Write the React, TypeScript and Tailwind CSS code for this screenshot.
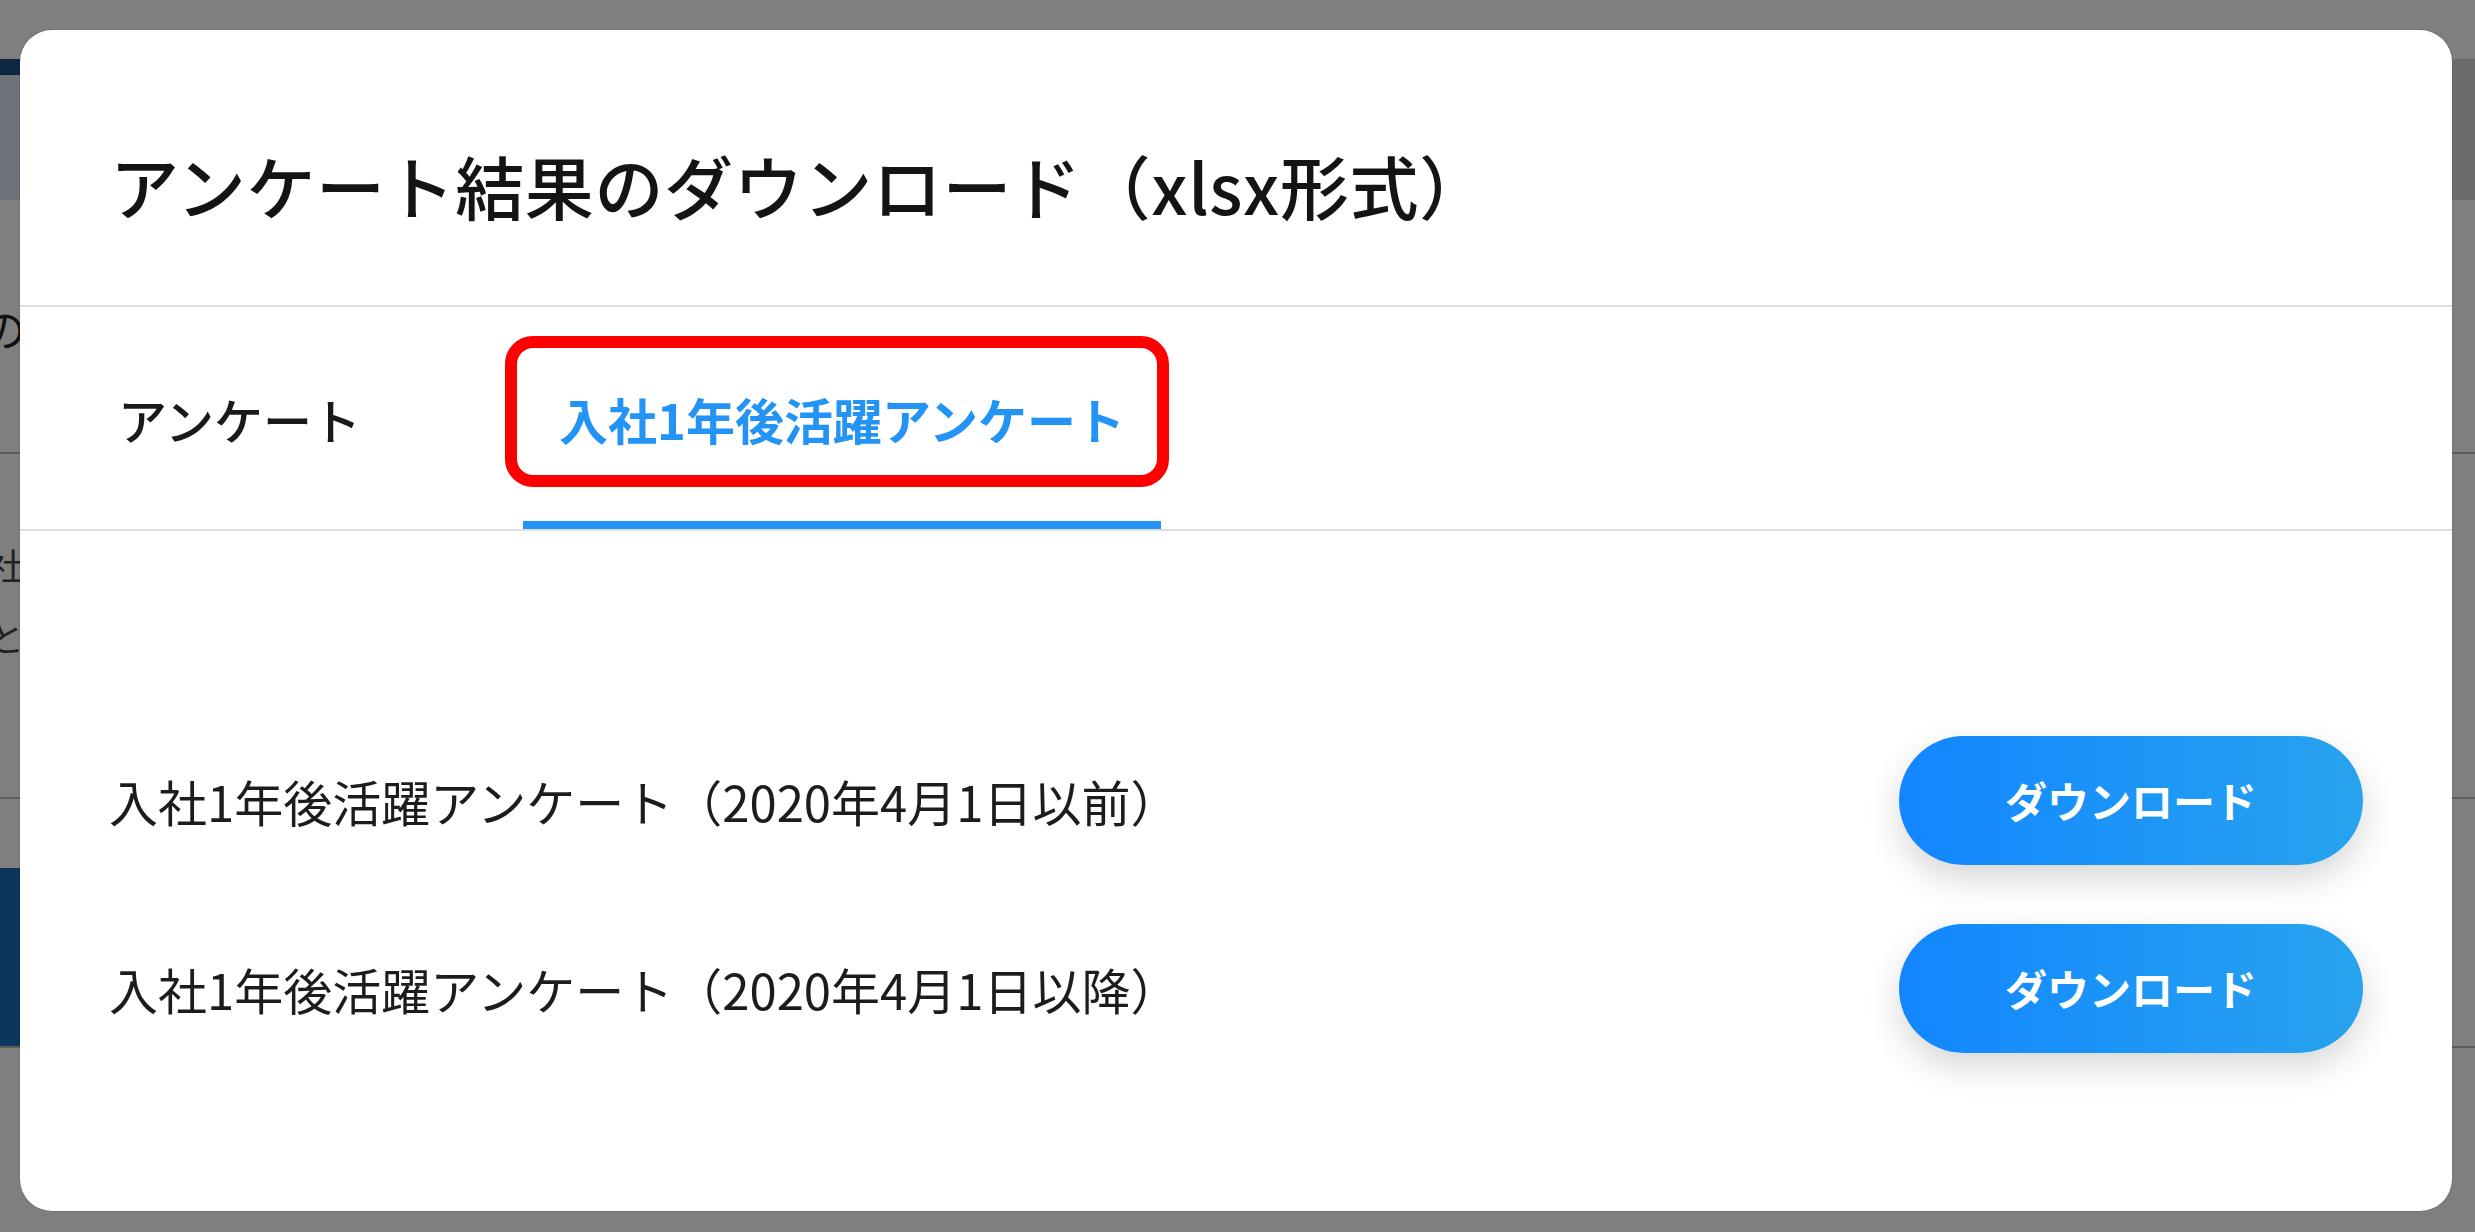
import { useState } from "react";

const FONT = { fontFamily: '"Noto Sans CJK JP", "Noto Sans", sans-serif' };

const tabs = ["アンケート", "入社1年後活躍アンケート"];

const rows = [
  "入社1年後活躍アンケート（2020年4月1日以前）",
  "入社1年後活躍アンケート（2020年4月1日以降）",
];

function PageBehind() {
  return (
    <div className="flex h-full w-full flex-col bg-white text-[#222]">
      <div className="h-[59px]" />
      <div className="flex h-[141px]">
        <div className="flex w-[40px] flex-col">
          <div className="h-[16px] bg-[#1c4f86]" />
          <div className="flex-1 bg-[#dbe6f0]" />
        </div>
        <div className="flex-1" />
        <div className="w-[40px] bg-[#d2d6d9]" />
      </div>
      <div className="flex h-[252px] items-start pt-[106px] text-[44px] leading-none">
        <span className="-ml-[18px]">の</span>
      </div>
      <div className="flex h-[345px] border-t-2 border-[#bbb]">
        <div className="flex w-[60px] flex-col gap-[36px] pt-[92px] text-[36px] leading-none text-[#444]">
          <span className="-ml-[12px]">社</span>
          <span className="-ml-[12px]">と</span>
        </div>
      </div>
      <div className="flex h-[249px] border-t-2 border-[#bbb]">
        <div className="mt-[69px] h-[178px] w-[40px] bg-[#1a6cb8]" />
        <div className="flex-1" />
      </div>
      <div className="flex h-[133px] border-t-2 border-[#bbb]">
        <div className="ml-[1088px] mt-[113px] h-[20px] w-[99px] bg-[#cad4da]" />
      </div>
    </div>
  );
}

export default function App() {
  const [active, setActive] = useState(1);

  return (
    <div className="relative h-[1232px] w-[2475px] overflow-hidden" style={FONT}>
      <PageBehind />

      {/* overlay + modal */}
      <div className="absolute inset-0 flex items-start bg-black/50 pl-[20px] pt-[30px]">
        <div className="flex h-[1181px] w-[2432px] flex-col overflow-hidden rounded-[32px] bg-white shadow-[0_0_2px_rgba(0,0,0,0.25)]">
          <div className="flex h-[277px] shrink-0 items-center border-b-2 border-[#dedede] px-[90px] pt-[36px]">
            <h1 className="text-[69px] font-medium leading-none tracking-[0.6px] text-[#141414]">
              アンケート結果のダウンロード（xlsx形式）
            </h1>
          </div>

          <div className="flex h-[224px] shrink-0 gap-[126px] border-b-2 border-[#dedede] pl-[62px]">
            {tabs.map((t, idx) => (
              <button
                key={t}
                onClick={() => setActive(idx)}
                className={
                  idx === active
                    ? "relative flex h-full items-center px-[36px] text-[49px] font-bold leading-none text-[#2393f5]"
                    : "relative flex h-full items-center px-[36px] text-[49px] font-medium leading-none text-[#1a1a1a]"
                }
              >
                {t}
                {idx === active && (
                  <>
                    <span className="absolute bottom-0 left-0 right-0 h-[8px] bg-[#2393f5]" />
                    <span className="absolute left-[-18px] top-[29px] h-[151px] w-[664px] rounded-[28px] border-[12px] border-[#ff0000]" />
                  </>
                )}
              </button>
            ))}
          </div>

          <div className="flex flex-col px-[89px] pt-[175px]">
            {rows.map((r) => (
              <div key={r} className="flex h-[188px] items-center justify-between">
                <span className="text-[49px] leading-none text-[#1c1c1c]">{r}</span>
                <button className="flex h-[129px] w-[464px] items-center justify-center rounded-full bg-gradient-to-r from-[#1386ff] to-[#28a3ee] text-[42px] font-bold leading-none text-white shadow-[0_14px_34px_rgba(0,0,0,0.16)]">
                  ダウンロード
                </button>
              </div>
            ))}
          </div>
        </div>
      </div>
    </div>
  );
}
